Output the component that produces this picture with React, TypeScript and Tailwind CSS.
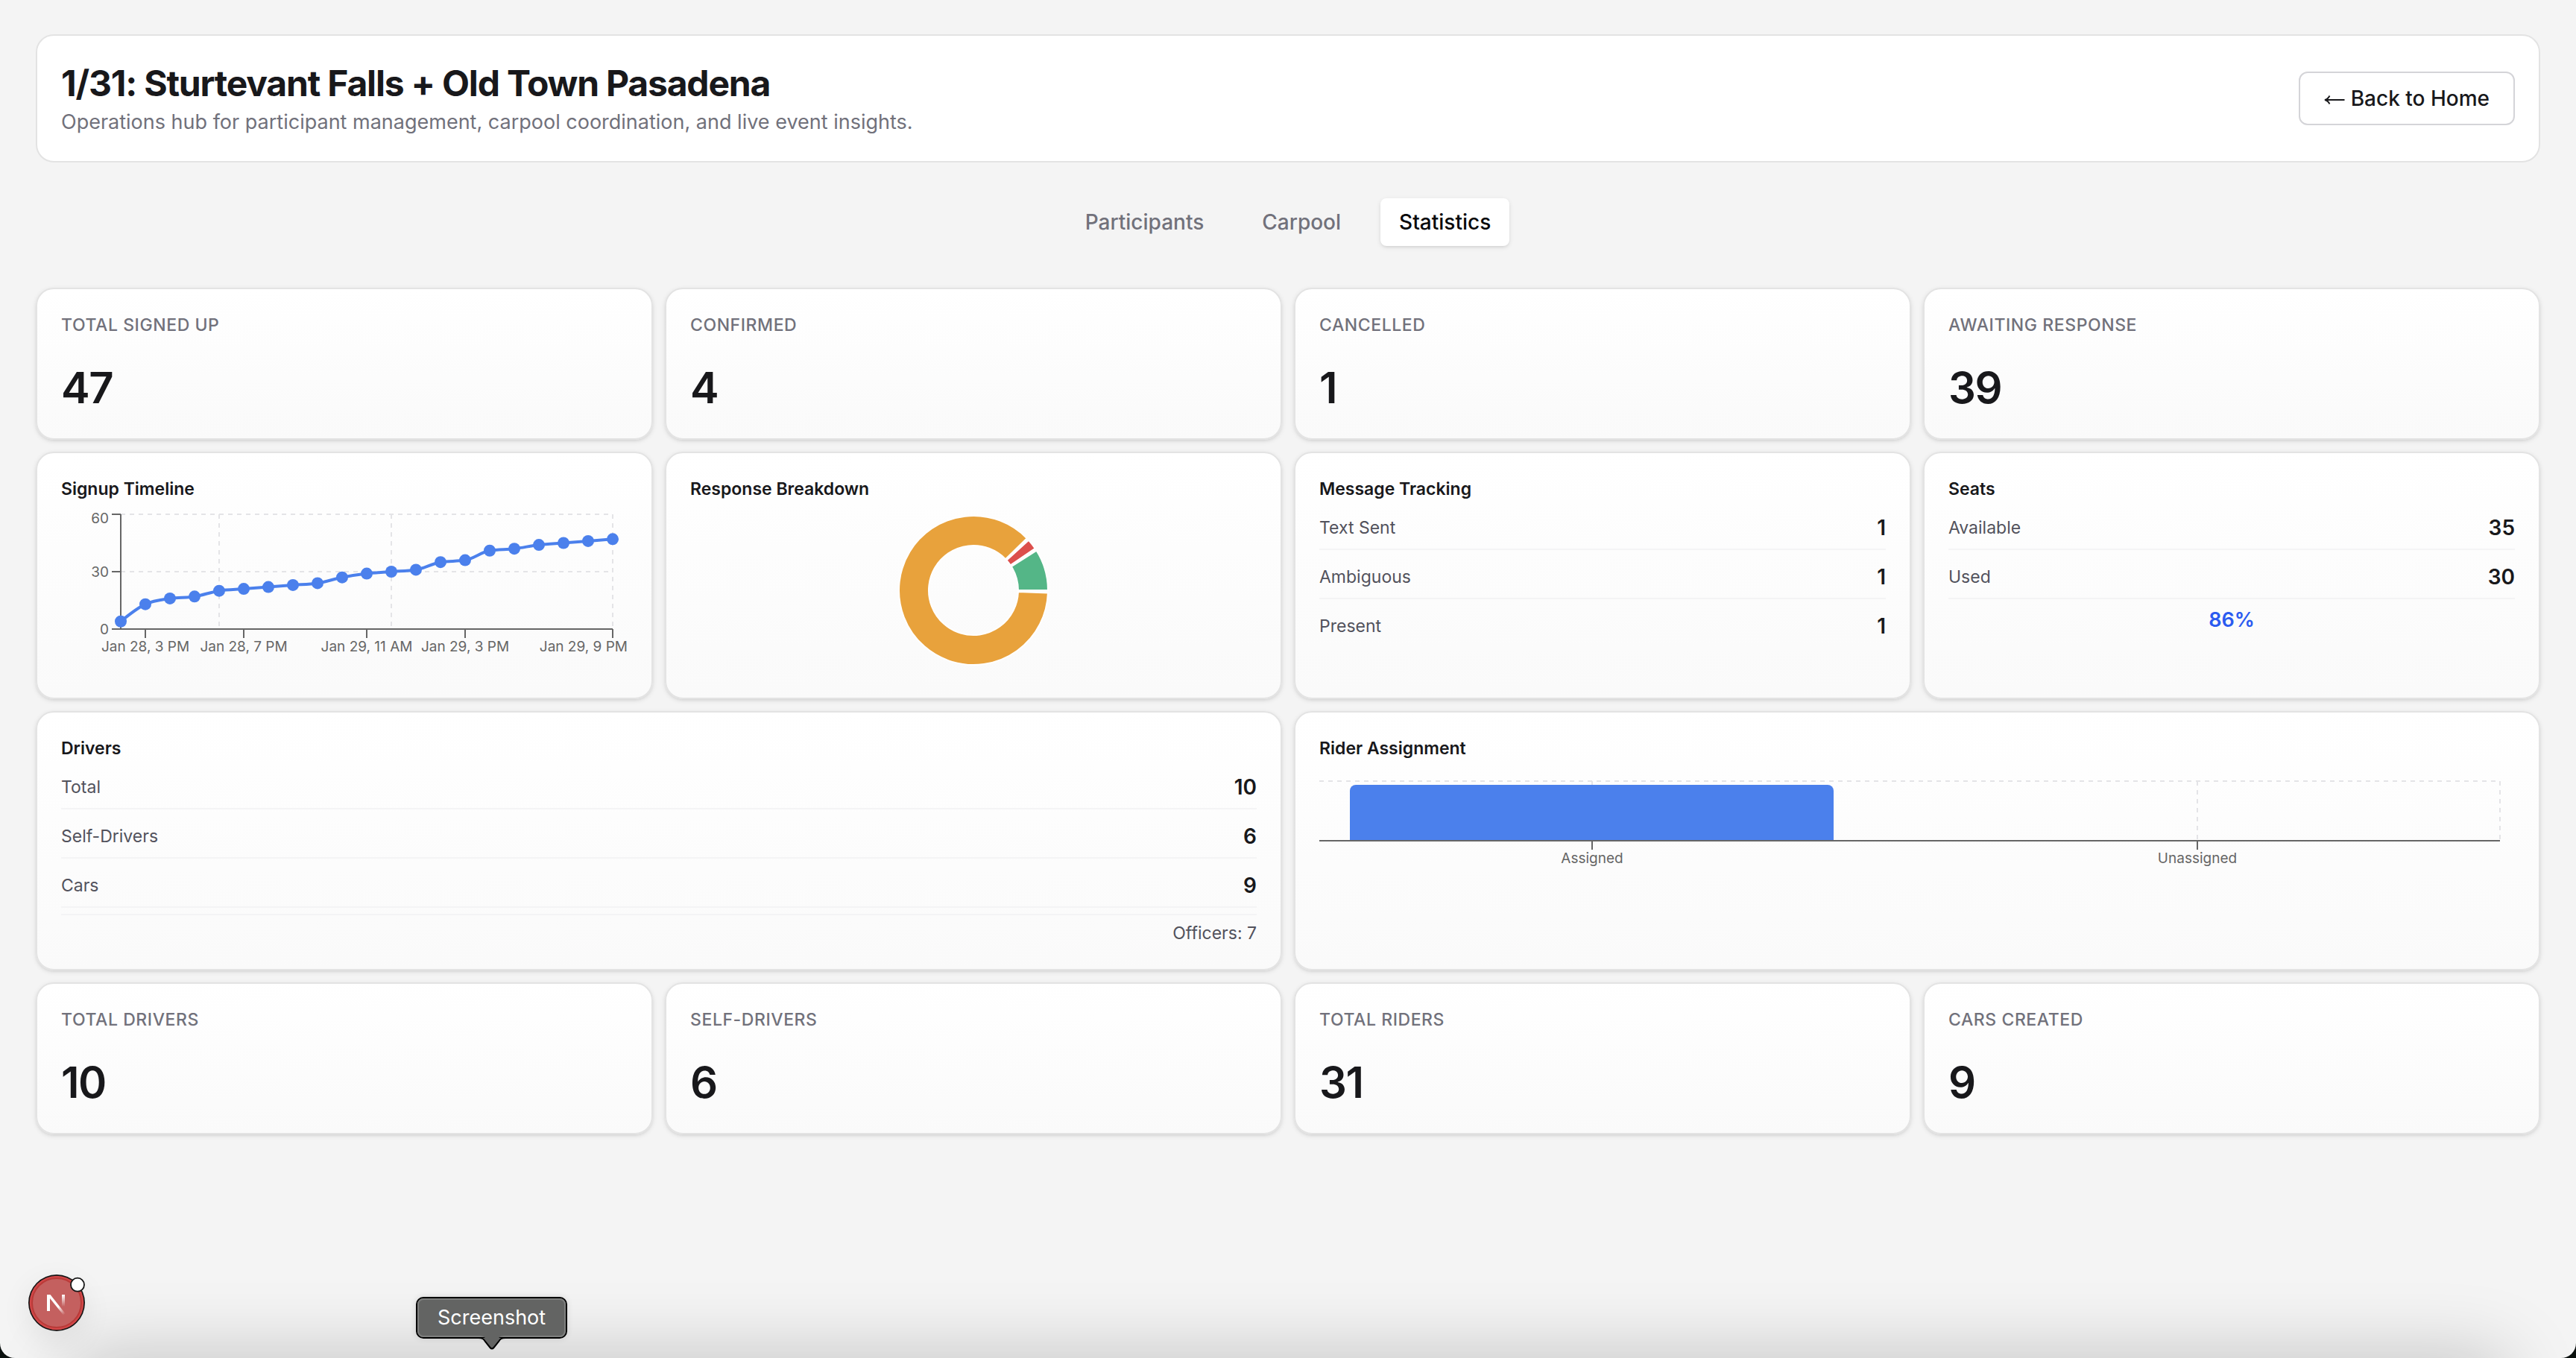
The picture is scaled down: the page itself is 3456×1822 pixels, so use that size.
import type { ReactNode } from 'react';

const CARD =
  'rounded-3xl border-2 border-[#e3e3e3] bg-linear-to-b from-white to-[#fafafa] p-8 shadow-[0_2px_6px_rgba(0,0,0,0.1),0_2px_4px_-2px_rgba(0,0,0,0.1)]';

const GREY = '#666666';
const GRID = '#e4e4e7';
const BLUE = '#4b80ec';

function StatCard({ label, value }: { label: string; value: number }) {
  return (
    <section className={`${CARD} flex flex-col gap-8`}>
      <h2 className="text-[23px] leading-8 font-medium tracking-wide text-zinc-500 uppercase">{label}</h2>
      <p className="text-[58px] leading-[72px] font-semibold tracking-tight text-zinc-900">{value}</p>
    </section>
  );
}

function Panel({ title, wide, children }: { title: string; wide?: boolean; children: ReactNode }) {
  return (
    <section className={wide ? `${CARD} col-span-2` : CARD}>
      <h2 className="text-[23px] leading-8 font-semibold text-zinc-900">{title}</h2>
      {children}
    </section>
  );
}

function Rows({ rows, lastLine }: { rows: [string, number][]; lastLine?: boolean }) {
  return (
    <dl className="mt-4 flex flex-col gap-4">
      {rows.map(([name, value], i) => (
        <div
          key={name}
          className={
            i < rows.length - 1 || lastLine
              ? 'flex items-center justify-between border-b-2 border-zinc-100 pb-2'
              : 'flex items-center justify-between'
          }
        >
          <dt className="text-[23px] leading-10 text-zinc-600">{name}</dt>
          <dd className="text-[28px] leading-10 font-semibold text-zinc-900">{value}</dd>
        </div>
      ))}
    </dl>
  );
}

type Pt = [number, number];

/* Monotone cubic interpolation through the points. */
function curve(p: Pt[]) {
  const n = p.length;
  const slope = (i: number) => (p[i + 1][1] - p[i][1]) / (p[i + 1][0] - p[i][0]);
  const t = p.map((_, i) => {
    if (i === 0 || i === n - 1) return 0;
    const a = slope(i - 1);
    const b = slope(i);
    return (Math.sign(a) + Math.sign(b)) * Math.min(Math.abs(a), Math.abs(b), 0.25 * Math.abs(a + b));
  });
  t[0] = (3 * slope(0) - t[1]) / 2;
  t[n - 1] = (3 * slope(n - 2) - t[n - 2]) / 2;
  let d = `M${p[0][0]},${p[0][1]}`;
  for (let i = 1; i < n; i++) {
    const h = (p[i][0] - p[i - 1][0]) / 3;
    d += `C${p[i - 1][0] + h},${p[i - 1][1] + h * t[i - 1]} ${p[i][0] - h},${p[i][1] - h * t[i]} ${p[i][0]},${p[i][1]}`;
  }
  return d;
}

const SIGNUPS = [4, 13, 16, 17, 20, 21, 22, 23, 24, 27, 29, 30, 31, 35, 36, 41, 42, 44, 45, 46, 47];
const TIMES: [number, string][] = [
  [1, 'Jan 28, 3 PM'],
  [5, 'Jan 28, 7 PM'],
  [10, 'Jan 29, 11 AM'],
  [14, 'Jan 29, 3 PM'],
  [20, 'Jan 29, 9 PM'],
];

function TimelineChart() {
  const x = (i: number) => 80 + i * 33;
  const y = (v: number) => 164 - (v * 154) / 60;
  const points = SIGNUPS.map((v, i): Pt => [x(i), y(v)]);
  return (
    <svg viewBox="0 0 760 224" className="mt-2 w-full" role="img" aria-label="Signup timeline">
      <g stroke={GRID} strokeWidth="2" strokeDasharray="6 6">
        {[60, 30].map((v) => (
          <line key={v} x1="80" x2="740" y1={y(v)} y2={y(v)} />
        ))}
        {[4, 11, 20].map((i) => (
          <line key={i} x1={x(i)} x2={x(i)} y1="10" y2="164" />
        ))}
      </g>
      <g stroke={GREY} strokeWidth="2">
        <line x1="80" x2="80" y1="10" y2="164" />
        <line x1="80" x2="740" y1="164" y2="164" />
        {[0, 30, 60].map((v) => (
          <line key={v} x1="68" x2="80" y1={y(v)} y2={y(v)} />
        ))}
        {TIMES.map(([i]) => (
          <line key={i} x1={x(i)} x2={x(i)} y1="164" y2="176" />
        ))}
      </g>
      <g fill={GREY} className="text-[19px]">
        <text x="64" y="22" textAnchor="end">60</text>
        <text x="64" y="94" textAnchor="end">30</text>
        <text x="64" y="171" textAnchor="end">0</text>
        {TIMES.map(([i, label]) => (
          <text key={i} x={i === 20 ? 760 : x(i)} y="194" textAnchor={i === 20 ? 'end' : 'middle'}>
            {label}
          </text>
        ))}
      </g>
      <path d={curve(points)} fill="none" stroke={BLUE} strokeWidth="4" />
      {points.map(([cx, cy]) => (
        <circle key={cx} cx={cx} cy={cy} r="8" fill={BLUE} />
      ))}
    </svg>
  );
}

function sector(from: number, to: number) {
  const at = (r: number, deg: number) => {
    const a = (deg * Math.PI) / 180;
    return `${380 + r * Math.cos(a)},${112 - r * Math.sin(a)}`;
  };
  const big = to - from > 180 ? 1 : 0;
  return `M${at(100, from)}A100,100 0 ${big} 0 ${at(100, to)}L${at(60, to)}A60,60 0 ${big} 1 ${at(60, from)}Z`;
}

function BreakdownChart() {
  const data: [number, string][] = [
    [4, '#54b687'],
    [1, '#dc4f4c'],
    [39, '#e8a23c'],
  ];
  let start = 0;
  return (
    <svg viewBox="0 0 760 224" className="mt-2 w-full" role="img" aria-label="Response breakdown">
      {data.map(([count, fill]) => {
        const from = start;
        const to = from + (count / 44) * 354;
        start = to + 2;
        return <path key={fill} d={sector(from, to)} fill={fill} stroke="#ffffff" strokeWidth="2" />;
      })}
    </svg>
  );
}

function RiderChart() {
  return (
    <svg viewBox="0 0 1604 160" className="mt-2 w-full" role="img" aria-label="Rider assignment">
      <g stroke={GRID} strokeWidth="2" strokeDasharray="6 6">
        <line x1="0" x2="1584" y1="20" y2="20" />
        <line x1="366" x2="366" y1="20" y2="100" />
        <line x1="1178" x2="1178" y1="20" y2="100" />
        <line x1="1584" x2="1584" y1="20" y2="100" />
      </g>
      <path d="M41,100V33a8,8 0 0 1 8,-8H682a8,8 0 0 1 8,8V100Z" fill={BLUE} />
      <g stroke={GREY} strokeWidth="2">
        <line x1="0" x2="1584" y1="100" y2="100" />
        <line x1="366" x2="366" y1="100" y2="112" />
        <line x1="1178" x2="1178" y1="100" y2="112" />
      </g>
      <g fill={GREY} className="text-[19px]" textAnchor="middle">
        <text x="366" y="130">Assigned</text>
        <text x="1178" y="130">Unassigned</text>
      </g>
    </svg>
  );
}

const TAB = 'rounded-lg px-[25px] text-[28px] leading-[64px] font-medium';

export default function App() {
  return (
    <div className="min-h-screen bg-[#0a100e] font-['Inter',sans-serif]">
      <div className="relative min-h-screen overflow-hidden rounded-b-[20px] bg-[#f4f4f4]">
        {/* Soft shade rising from the dock */}
        <div className="pointer-events-none absolute inset-x-24 top-full h-24 shadow-[0_0_100px_rgba(0,0,0,0.22)]" />

        <main className="px-12 pt-[46px] pb-12">
          <header className="flex items-center justify-between rounded-3xl border-2 border-[#e3e3e3] bg-white p-8">
            <div>
              <h1 className="text-[48px] leading-[64px] font-bold tracking-tight text-zinc-900">
                1/31: Sturtevant Falls + Old Town Pasadena
              </h1>
              <p className="text-[27px] leading-10 text-zinc-500">
                Operations hub for participant management, carpool coordination, and live event insights.
              </p>
            </div>
            <a
              href="#home"
              className="flex items-center gap-2 rounded-xl border-2 border-zinc-300 bg-white px-8 text-[28px] leading-[68px] font-medium text-zinc-900"
            >
              <svg viewBox="0 0 28 14" className="mt-1 h-[14px] w-7" fill="none" stroke="currentColor" strokeWidth="1.8" aria-hidden="true">
                <path d="M27.500 7H2M7.500 1.500C6 4.500 4 6.300 1 7C4 7.700 6 9.500 7.500 12.500" />
              </svg>
              Back to Home
            </a>
          </header>

          <nav role="tablist" className="mt-12 flex justify-center gap-7">
            <button type="button" role="tab" aria-selected="false" className={`${TAB} text-zinc-500`}>
              Participants
            </button>
            <button type="button" role="tab" aria-selected="false" className={`${TAB} text-zinc-500`}>
              Carpool
            </button>
            <button
              type="button"
              role="tab"
              aria-selected="true"
              className={`${TAB} bg-white text-zinc-950 shadow-[0_2px_6px_rgba(0,0,0,0.1),0_2px_4px_-2px_rgba(0,0,0,0.1)]`}
            >
              Statistics
            </button>
          </nav>

          <div className="mt-14 grid grid-cols-4 gap-4">
            <StatCard label="Total Signed Up" value={47} />
            <StatCard label="Confirmed" value={4} />
            <StatCard label="Cancelled" value={1} />
            <StatCard label="Awaiting Response" value={39} />

            <Panel title="Signup Timeline">
              <TimelineChart />
            </Panel>
            <Panel title="Response Breakdown">
              <BreakdownChart />
            </Panel>
            <Panel title="Message Tracking">
              <Rows rows={[['Text Sent', 1], ['Ambiguous', 1], ['Present', 1]]} />
            </Panel>
            <Panel title="Seats">
              <Rows rows={[['Available', 35], ['Used', 30]]} lastLine />
              <p className="mt-2 text-center text-[27px] leading-10 font-semibold text-[#2b5bf0]">86%</p>
            </Panel>

            <Panel title="Drivers" wide>
              <Rows rows={[['Total', 10], ['Self-Drivers', 6], ['Cars', 9]]} lastLine />
              <p className="mt-2 border-t-2 border-zinc-100 pt-2 text-right text-[23px] leading-8 text-zinc-600">
                Officers: 7
              </p>
            </Panel>
            <Panel title="Rider Assignment" wide>
              <RiderChart />
            </Panel>

            <StatCard label="Total Drivers" value={10} />
            <StatCard label="Self-Drivers" value={6} />
            <StatCard label="Total Riders" value={31} />
            <StatCard label="Cars Created" value={9} />
          </div>
        </main>

        <button
          type="button"
          aria-label="Open Next.js Dev Tools"
          className="absolute bottom-9 left-[38px] size-[76px] rounded-full shadow-[0_12px_40px_rgba(0,0,0,0.08)]"
        >
          <svg viewBox="0 0 76 76" className="size-full overflow-visible">
            <defs>
              <linearGradient id="diagonal" gradientUnits="userSpaceOnUse" x1="40" y1="43" x2="48" y2="54">
                <stop stopColor="#fff" />
                <stop offset="1" stopColor="#fff" stopOpacity="0" />
              </linearGradient>
              <linearGradient id="stem" gradientUnits="userSpaceOnUse" x1="0" y1="27" x2="0" y2="43">
                <stop stopColor="#fff" />
                <stop offset="1" stopColor="#fff" stopOpacity="0" />
              </linearGradient>
            </defs>
            <circle cx="38" cy="38" r="38" fill="#161616" />
            <circle cx="38" cy="38" r="36.300" fill="#d24748" />
            <circle cx="38" cy="38" r="33" fill="#c4605f" stroke="#ba3a38" strokeWidth="2" />
            <rect x="25" y="27" width="4" height="22" fill="#fff" />
            <rect x="45" y="27" width="4" height="16" fill="url(#stem)" />
            <path d="M25 27H29.500L50 53L47.500 55Z" fill="url(#diagonal)" />
            <circle cx="66" cy="13.700" r="9" fill="#fff" stroke="#161616" strokeWidth="1.800" />
          </svg>
        </button>

        <div
          role="tooltip"
          className="absolute bottom-[26px] left-[558px] rounded-[10px] border-2 border-black bg-[#636463] shadow-[0_0_8px_rgba(0,0,0,0.12)]"
        >
          <div className="rounded-lg border-2 border-[#7e7f7e] px-[25px] text-[27px] leading-[48px] text-white">
            Screenshot
          </div>
          <svg viewBox="0 0 40 20" className="absolute top-[calc(100%-2px)] left-1/2 h-5 w-10 -translate-x-1/2">
            <path d="M4 0C9 0 11 3 13 6L18 14.500Q20 17 22 14.500L27 6C29 3 31 0 36 0Z" fill="#636463" />
            <path
              d="M2 3C8 3 9 5 11 8L17.500 16Q20 19 22.500 16L29 8C31 5 32 3 38 3"
              fill="#636463"
              stroke="#000"
              strokeWidth="2"
            />
          </svg>
        </div>
      </div>
    </div>
  );
}
